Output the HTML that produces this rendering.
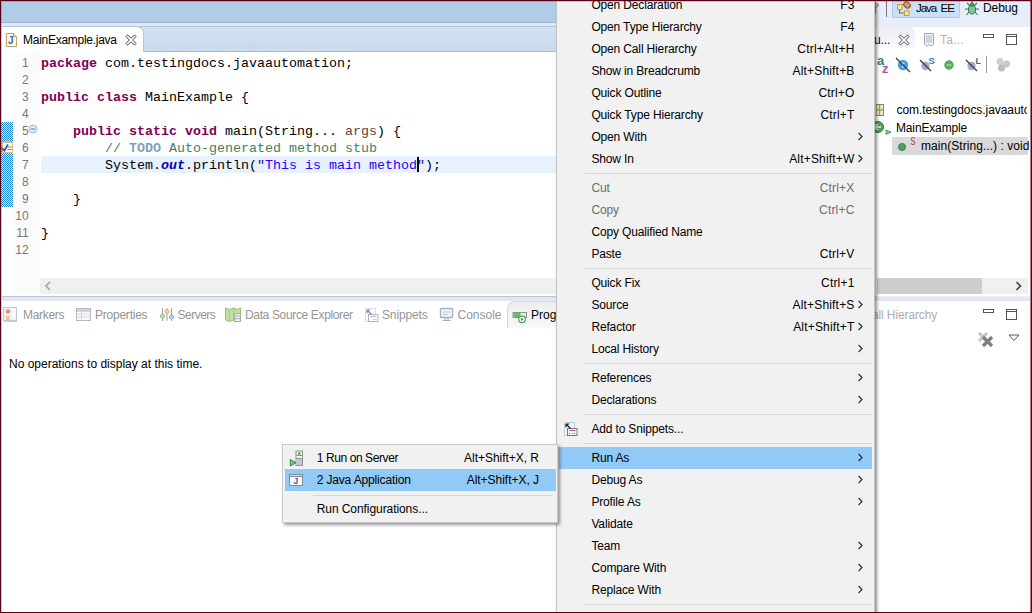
<!DOCTYPE html>
<html><head><meta charset="utf-8"><title>Eclipse - Run As Java Application</title>
<style>
*{box-sizing:border-box;margin:0;padding:0}
html,body{width:1032px;height:613px;overflow:hidden;background:#fff}
body{position:relative;font-family:"Liberation Sans",sans-serif;font-size:12px;color:#000;line-height:1}
#root{position:absolute;left:0;top:0;width:1032px;height:613px;overflow:hidden}
#root>div,#root>svg{position:absolute}
/* top */
#topbar{left:0;top:0;width:1032px;height:22px;background:#b1cce6}
#topline1{left:0;top:22px;width:1032px;height:1px;background:#9fb6d2}
#topband{left:0;top:23px;width:1032px;height:3px;background:#dfe8f6}
/* editor */
#edhead{left:2px;top:26px;width:870px;height:26px;background:linear-gradient(#d3e1f1,#c9d9ec);border-top:1px solid #b4c3d8;border-bottom:1px solid #a9bcd6}
#edtab{left:2px;top:26px;width:142px;height:26px;background:#fff;border-top:1px solid #b4c3d8;border-right:1px solid #b4c3d8;border-radius:0 7px 0 0}
#edtabtxt{left:23px;top:34.2px;letter-spacing:-.27px;white-space:nowrap}
#edbody{left:2px;top:52px;width:870px;height:226px;background:#fff}
#ruler{left:13px;top:52px;width:27px;height:242px;background:#fbfbfb}
#bluebar{left:1px;top:122px;width:12px;height:85px;background:#86bfe3;background-image:repeating-conic-gradient(#1f88d4 0% 25%,#d4f0fc 0% 50%);background-size:2px 2px}
#curline{left:41px;top:156px;width:520px;height:17px;background:#e8f2fe}
.cl{position:absolute;left:41px;height:17px;line-height:17px;font-family:"Liberation Mono",monospace;font-size:13.33px;white-space:pre;color:#000}
.ln{position:absolute;left:2px;width:26.7px;text-align:right;height:17px;line-height:17px;font-family:"Liberation Sans",sans-serif;font-size:12px;color:#787878;margin-top:0px}
.k{color:#7f0055}.a{color:#6a3e3e}.c{color:#3f7f5f}.t{color:#7f9fbf}.s{color:#2a00ff}.f{color:#0000c0;font-style:italic}
#caret{left:417px;top:157px;width:2px;height:15px;background:#000}
#hscroll{left:40px;top:278px;width:832px;height:16px;background:#f0f0f0}
#sash1{left:2px;top:296px;width:1028px;height:1px;background:#bcc4dc}
#sash2{left:2px;top:297px;width:1028px;height:4px;background:#e3e6f5}
/* bottom */
.bt{position:absolute;top:309px;color:#959595;white-space:nowrap}
#progtab{left:507px;top:301px;width:60px;height:27px;background:linear-gradient(#eeeeee,#f8f8f8);border-top:1px solid #d6d6d6;border-left:1px solid #d6d6d6;border-radius:8px 0 0 0}

/* right panel */
#persp{left:873px;top:0;width:159px;height:27px;background:#e8eef9}
#jee{left:892px;top:-1px;width:68px;height:19px;background:#c9e0f7;border:1px solid #a9cdf0}
#psep{left:886px;top:1px;width:1px;height:16px;background:#777}
.pt{position:absolute;top:2px;white-space:nowrap;color:#000}
#outl{left:877px;top:27px;width:152px;height:269px;background:#fff;border-radius:0 7px 0 0}
#outab{left:877px;top:27px;width:38px;height:21px;background:linear-gradient(#ececf2,#fbfbfd);border-radius:0 7px 0 0}
#osel{left:892px;top:137px;width:136px;height:18px;background:#d9d9d9}
.ot{position:absolute;white-space:nowrap;color:#000;letter-spacing:-.1px}
#oscroll{left:877px;top:278px;width:151px;height:16px;background:#f0f0f0}
#othumb{left:877px;top:278px;width:105px;height:16px;background:#cdcdcd}
/* menu */
#menu{left:556px;top:-30px;width:319px;height:660px;background:#f1f1f1;border:1px solid #c4c4c4;box-shadow:2px 2px 3px rgba(0,0,0,.45)}
.mi{position:absolute;left:2px;width:313px;height:22px;line-height:22px;white-space:nowrap}
.mi.hl{background:#91c9f7}
.mi .lb{position:absolute;left:32.4px;letter-spacing:-.15px}
.mi .sc{position:absolute;right:17.5px;letter-spacing:.18px}
.mi .ar{position:absolute;left:299.3px;top:6px}
.mi.dis{color:#6d6d6d}
.sep{position:absolute;left:28px;width:287px;height:1px;background:#d7d7d7}
#sub{left:282px;top:444px;width:275.5px;height:79px;background:#f1f1f1;border:1px solid #c8c8c8;box-shadow:2px 2px 3px rgba(0,0,0,.4)}
#sub .mi{left:2px;width:271px}
#sub .mi .lb{left:31.7px}
#sub .mi .sc{right:17px;letter-spacing:-.03px}
#frame{left:0;top:0;width:1032px;height:613px;border:1px solid #5a0015;pointer-events:none}
#frame2{left:1px;top:1px;width:1030px;height:611px;border:1px solid rgba(150,40,70,.28);border-right:none;border-bottom:none;pointer-events:none}
</style></head><body>
<div id="root">
<div id="topbar"></div><div id="topline1"></div><div id="topband"></div>
<div id="edhead"></div>
<div id="edbody"></div>
<div id="ruler"></div>
<div id="edtab"></div>
<div id="edtabtxt">MainExample.java</div>
<div id="bluebar"></div>
<div id="curline"></div>
<div class="ln" style="top:55px">1</div><div class="ln" style="top:72px">2</div><div class="ln" style="top:89px">3</div><div class="ln" style="top:106px">4</div><div class="ln" style="top:123px">5</div><div class="ln" style="top:140px">6</div><div class="ln" style="top:157px">7</div><div class="ln" style="top:174px">8</div><div class="ln" style="top:191px">9</div><div class="ln" style="top:208px">10</div><div class="ln" style="top:225px">11</div><div class="ln" style="top:242px">12</div>
<div class="cl" style="top:55px"><b class="k">package</b> com.testingdocs.javaautomation;</div><div class="cl" style="top:72px"></div><div class="cl" style="top:89px"><b class="k">public</b> <b class="k">class</b> MainExample {</div><div class="cl" style="top:106px"></div><div class="cl" style="top:123px">    <b class="k">public</b> <b class="k">static</b> <b class="k">void</b> main(String... <span class="a">args</span>) {</div><div class="cl" style="top:140px">        <span class="c">// <b class="t">TODO</b> Auto-generated method stub</span></div><div class="cl" style="top:157px">        System.<b class="f">out</b>.println(<span class="s">"This is main method"</span>);</div><div class="cl" style="top:174px"></div><div class="cl" style="top:191px">    }</div><div class="cl" style="top:208px"></div><div class="cl" style="top:225px">}</div><div class="cl" style="top:242px"></div>
<div id="caret"></div>
<div id="hscroll"></div>
<div id="sash1"></div><div id="sash2"></div><div style="left:876px;top:296px;width:154px;height:1px;background:#eef0f8"></div>
<div class="bt" style="left:23px;letter-spacing:-.3px">Markers</div>
<div class="bt" style="left:95px;letter-spacing:-.23px">Properties</div>
<div class="bt" style="left:177.5px;letter-spacing:-.5px">Servers</div>
<div class="bt" style="left:245px;letter-spacing:-.35px">Data Source Explorer</div>
<div class="bt" style="left:382px;letter-spacing:-.15px">Snippets</div>
<div class="bt" style="left:457.5px">Console</div>
<div id="progtab"></div>
<div class="bt" style="left:531px;color:#000">Prog</div>
<div style="left:9px;top:358px;white-space:nowrap">No operations to display at this time.</div>

<div id="persp"></div><div id="psep"></div><div id="jee"></div>
<svg style="left:896px;top:1px" width="16" height="16" viewBox="0 0 16 16"><path d="M3.500 8v4h5" fill="none" stroke="#8a6a2a" stroke-width="1.200"/><rect x="1.500" y="3.500" width="4.500" height="5" fill="#ffe79a" stroke="#c89a3a"/><rect x="8.500" y="10" width="4.500" height="4.500" fill="#ffe79a" stroke="#c89a3a"/><ellipse cx="11" cy="4" rx="3.700" ry="2.900" transform="rotate(40 11 4)" fill="#c98a4a" stroke="#7a4a1a" stroke-width=".9"/><path d="M9 2.500l3.500 3.500M10.300 1.600l3 3" stroke="#f0d090" stroke-width=".8"/></svg><svg style="left:874px;top:1px" width="7" height="14" viewBox="0 0 7 14"><path d="M1 1l4 3-3.500 3z" fill="#c8d8a0" stroke="#7a8a4a" stroke-width=".8"/><path d="M1.500 7v6" stroke="#8a8a8a"/></svg>
<div class="pt" style="left:916px;font-size:11.6px;letter-spacing:-1.1px;word-spacing:2.4px">Java EE</div>
<svg style="left:964px;top:0" width="16" height="17" viewBox="0 0 16 17"><g stroke="#3c7a55" stroke-width="1.100" fill="none"><path d="M3 3l3 3M13 3l-3 3M1 9h4M15 9h-4M2.500 15l3-3.500M13.500 15l-3-3.500M8 1v3"/></g><ellipse cx="8" cy="9.500" rx="3.600" ry="4.600" fill="#7fc6a0" stroke="#2f6d4a"/><circle cx="8" cy="4.600" r="1.800" fill="#4f9a73" stroke="#2f6d4a" stroke-width=".8"/></svg>
<div class="pt" style="left:983px;letter-spacing:-.1px">Debug</div>
<div id="outl"></div><div id="outab"></div>
<div class="ot" style="left:874px;top:34px">u...</div>
<svg style="left:898px;top:34px" width="12" height="12" viewBox="0 0 12 12"><path d="M1 2.500L2.500 1 6 4.200 9.500 1 11 2.500 7.800 6 11 9.500 9.500 11 6 7.800 2.500 11 1 9.500 4.200 6Z" fill="#fff" stroke="#4a4a4a" stroke-width="1"/></svg>
<svg style="left:923px;top:32px" width="12" height="16" viewBox="0 0 12 16"><path d="M1.500 1.500h9v11l-2.200 1.500-2.300-1.500-2.300 1.500L1.500 12.500Z" fill="#f3f4f8" stroke="#9fa6c0"/><path d="M3 4h6M3 6h6M3 8h6M3 10h6" stroke="#aab0c6" stroke-width="1"/></svg>
<div class="ot" style="left:940px;top:34px;color:#b4b4b4;letter-spacing:.3px">Ta...</div>
<svg style="left:983px;top:34px" width="11" height="5" viewBox="0 0 11 5"><rect x=".5" y=".5" width="10" height="3" fill="#fff" stroke="#555"/></svg>
<svg style="left:1006px;top:34px" width="11" height="11" viewBox="0 0 11 11"><rect x=".5" y=".5" width="10" height="10" fill="#fff" stroke="#555"/><path d="M.500 2.500h10" stroke="#555"/></svg>
<!-- outline toolbar -->
<svg style="left:876px;top:55px" width="160" height="20" viewBox="0 0 160 20">
<text x="1" y="10" font-family="Liberation Sans,sans-serif" font-weight="bold" font-size="13" fill="#2a8a70">a</text>
<text x="6" y="17.800" font-family="Liberation Sans,sans-serif" font-weight="bold" font-size="13" fill="#b0549c">z</text>
<circle cx="27" cy="10" r="5.200" fill="#4d9ed6"/><path d="M25.500 8h3M27 8v5" stroke="#cfe6f7" stroke-width="1.200" fill="none"/><path d="M20 3l14 14" stroke="#2d3a66" stroke-width="1.300"/>
<circle cx="49.500" cy="11" r="4.200" fill="#a4a9c6"/><path d="M44 5l11 11" stroke="#2d3a66" stroke-width="1.300"/><text x="52.500" y="9" font-family="Liberation Sans,sans-serif" font-weight="bold" font-size="9.500" fill="#3d7fb3">S</text>
<circle cx="73" cy="10" r="4.200" fill="#5fae66" stroke="#3c8a47" stroke-width=".8"/><path d="M70.500 10h5" stroke="#a9dcae" stroke-width="1.200"/>
<circle cx="95.500" cy="11" r="4.200" fill="#a4a9c6"/><path d="M90 5l11 11" stroke="#2d3a66" stroke-width="1.300"/><text x="99.500" y="9" font-family="Liberation Sans,sans-serif" font-weight="bold" font-size="9" fill="#4a5fa8">L</text>
<path d="M110.500 1v17" stroke="#9a9a9a" stroke-width="1"/>
<circle cx="124" cy="6.500" r="3.400" fill="#cfcfcf"/><circle cx="130.500" cy="9" r="3.400" fill="#c6c6c6"/><circle cx="125.500" cy="13" r="3.600" fill="#bdbdbd"/>
</svg>
<!-- outline tree -->
<svg style="left:876px;top:102px" width="14" height="16" viewBox="0 0 14 16"><rect x="0" y="2.500" width="7.500" height="11" fill="#ecebc9" stroke="#8a8a55"/><path d="M0 8h7.500M3.700 2.500v11" stroke="#8a8a55"/></svg>
<div class="ot" style="left:896.5px;top:104px;letter-spacing:-.06px;width:130.5px;overflow:hidden;height:16px">com.testingdocs.javaautomation</div>
<svg style="left:874px;top:119px" width="18" height="18" viewBox="0 0 18 18"><circle cx="4" cy="8" r="5.500" fill="#4ea35a" stroke="#2e7a3a"/><path d="M1 8h6M4 5.500a2.500 2.500 0 1 0 0 5" stroke="#e8f6ea" stroke-width="1.400" fill="none"/><path d="M12 11l5 2.200-5 2.200z" fill="#7fd0a0" stroke="#2e8a5a" stroke-width=".8"/></svg>
<div class="ot" style="left:896px;top:122px;letter-spacing:-.15px">MainExample</div>
<div id="osel"></div>
<svg style="left:897px;top:135px" width="22" height="18" viewBox="0 0 22 18"><circle cx="5" cy="12" r="3.600" fill="#4fa35a" stroke="#2f7d3c" stroke-width=".8"/><text x="13.600" y="10.200" font-family="Liberation Sans,sans-serif" font-size="11" fill="#c02040" textLength="4.800" lengthAdjust="spacingAndGlyphs">S</text></svg>
<div class="ot" style="left:921px;top:140px;letter-spacing:.05px">main(String...) : void</div>
<div id="oscroll"></div><div id="othumb"></div>
<svg style="left:1015px;top:281px" width="8" height="10" viewBox="0 0 8 10"><path d="M1.500 1l4 4-4 4" fill="none" stroke="#404040" stroke-width="1.600"/></svg>
<!-- bottom right -->
<div class="bt" style="left:872px;color:#adadad;letter-spacing:-.12px">all Hierarchy</div>
<svg style="left:983px;top:309px" width="11" height="5" viewBox="0 0 11 5"><rect x=".5" y=".5" width="10" height="3" fill="#fff" stroke="#555"/></svg>
<svg style="left:1006px;top:308.500px" width="11" height="11" viewBox="0 0 11 11"><rect x=".5" y=".5" width="10" height="10" fill="#fff" stroke="#555"/><path d="M.500 2.500h10" stroke="#555"/></svg>
<svg style="left:977px;top:331px" width="18" height="18" viewBox="0 0 18 18"><path d="M2 2l8 8M10 2l-8 8" stroke="#c4c4c4" stroke-width="3"/><path d="M6 6l9 9M15 6l-9 9" stroke="#7d7d7d" stroke-width="3.200"/></svg>
<svg style="left:1008px;top:334px" width="12" height="8" viewBox="0 0 12 8"><path d="M1 1h10l-5 5.500z" fill="#fff" stroke="#555" stroke-width="1"/></svg>
<div id="menu" style="top:0;height:613px;border-top:none;border-bottom:none">
<div class="mi" style="top:-6px"><span class="lb">Open Declaration</span><span class="sc">F3</span></div>
<div class="mi" style="top:16px"><span class="lb">Open Type Hierarchy</span><span class="sc">F4</span></div>
<div class="mi" style="top:38px"><span class="lb">Open Call Hierarchy</span><span class="sc">Ctrl+Alt+H</span></div>
<div class="mi" style="top:60px"><span class="lb">Show in Breadcrumb</span><span class="sc">Alt+Shift+B</span></div>
<div class="mi" style="top:82px"><span class="lb">Quick Outline</span><span class="sc">Ctrl+O</span></div>
<div class="mi" style="top:104px"><span class="lb">Quick Type Hierarchy</span><span class="sc">Ctrl+T</span></div>
<div class="mi" style="top:126px"><span class="lb">Open With</span><svg class="ar" width="5" height="9" viewBox="0 0 5 9"><path d="M.6 1L4 4.500 .6 8" fill="none" stroke="#1e2a3a" stroke-width="1.100"/></svg></div>
<div class="mi" style="top:148px"><span class="lb">Show In</span><span class="sc wa">Alt+Shift+W</span><svg class="ar" width="5" height="9" viewBox="0 0 5 9"><path d="M.6 1L4 4.500 .6 8" fill="none" stroke="#1e2a3a" stroke-width="1.100"/></svg></div>
<div class="sep" style="top:173px"></div>
<div class="mi dis" style="top:177px"><span class="lb">Cut</span><span class="sc">Ctrl+X</span></div>
<div class="mi dis" style="top:199px"><span class="lb">Copy</span><span class="sc">Ctrl+C</span></div>
<div class="mi" style="top:221px"><span class="lb">Copy Qualified Name</span></div>
<div class="mi" style="top:243px"><span class="lb">Paste</span><span class="sc">Ctrl+V</span></div>
<div class="sep" style="top:268px"></div>
<div class="mi" style="top:272px"><span class="lb">Quick Fix</span><span class="sc">Ctrl+1</span></div>
<div class="mi" style="top:294px"><span class="lb">Source</span><span class="sc wa">Alt+Shift+S</span><svg class="ar" width="5" height="9" viewBox="0 0 5 9"><path d="M.6 1L4 4.500 .6 8" fill="none" stroke="#1e2a3a" stroke-width="1.100"/></svg></div>
<div class="mi" style="top:316px"><span class="lb">Refactor</span><span class="sc wa">Alt+Shift+T</span><svg class="ar" width="5" height="9" viewBox="0 0 5 9"><path d="M.6 1L4 4.500 .6 8" fill="none" stroke="#1e2a3a" stroke-width="1.100"/></svg></div>
<div class="mi" style="top:338px"><span class="lb">Local History</span><svg class="ar" width="5" height="9" viewBox="0 0 5 9"><path d="M.6 1L4 4.500 .6 8" fill="none" stroke="#1e2a3a" stroke-width="1.100"/></svg></div>
<div class="sep" style="top:363px"></div>
<div class="mi" style="top:367px"><span class="lb">References</span><svg class="ar" width="5" height="9" viewBox="0 0 5 9"><path d="M.6 1L4 4.500 .6 8" fill="none" stroke="#1e2a3a" stroke-width="1.100"/></svg></div>
<div class="mi" style="top:389px"><span class="lb">Declarations</span><svg class="ar" width="5" height="9" viewBox="0 0 5 9"><path d="M.6 1L4 4.500 .6 8" fill="none" stroke="#1e2a3a" stroke-width="1.100"/></svg></div>
<div class="sep" style="top:414px"></div>
<div class="mi" style="top:418px"><span class="lb">Add to Snippets...</span></div>
<div class="sep" style="top:443px"></div>
<div class="mi hl" style="top:447px"><span class="lb">Run As</span><svg class="ar" width="5" height="9" viewBox="0 0 5 9"><path d="M.6 1L4 4.500 .6 8" fill="none" stroke="#1e2a3a" stroke-width="1.100"/></svg></div>
<div class="mi" style="top:469px"><span class="lb">Debug As</span><svg class="ar" width="5" height="9" viewBox="0 0 5 9"><path d="M.6 1L4 4.500 .6 8" fill="none" stroke="#1e2a3a" stroke-width="1.100"/></svg></div>
<div class="mi" style="top:491px"><span class="lb">Profile As</span><svg class="ar" width="5" height="9" viewBox="0 0 5 9"><path d="M.6 1L4 4.500 .6 8" fill="none" stroke="#1e2a3a" stroke-width="1.100"/></svg></div>
<div class="mi" style="top:513px"><span class="lb">Validate</span></div>
<div class="mi" style="top:535px"><span class="lb">Team</span><svg class="ar" width="5" height="9" viewBox="0 0 5 9"><path d="M.6 1L4 4.500 .6 8" fill="none" stroke="#1e2a3a" stroke-width="1.100"/></svg></div>
<div class="mi" style="top:557px"><span class="lb">Compare With</span><svg class="ar" width="5" height="9" viewBox="0 0 5 9"><path d="M.6 1L4 4.500 .6 8" fill="none" stroke="#1e2a3a" stroke-width="1.100"/></svg></div>
<div class="mi" style="top:579px"><span class="lb">Replace With</span><svg class="ar" width="5" height="9" viewBox="0 0 5 9"><path d="M.6 1L4 4.500 .6 8" fill="none" stroke="#1e2a3a" stroke-width="1.100"/></svg></div>
<div class="sep" style="top:604px"></div>
</div>
<div id="sub">
<div class="mi" style="top:2px"><span class="lb" style="letter-spacing:-.4px">1 Run on Server</span><span class="sc">Alt+Shift+X, R</span></div>
<div class="mi hl" style="top:24px"><span class="lb" style="letter-spacing:-.15px">2 Java Application</span><span class="sc">Alt+Shift+X, J</span></div>
<div class="sep" style="top:50px;left:30px;width:240px"></div>
<div class="mi" style="top:53px"><span class="lb" style="letter-spacing:-.07px">Run Configurations...</span></div>
</div>

<!-- editor tab icons -->
<svg style="left:5px;top:32px" width="13" height="16" viewBox="0 0 13 16"><path d="M1.500 1.500h7l3 3v10h-10z" fill="#fffdf3" stroke="#c0a262"/><path d="M8.500 1.500v3h3" fill="#f3e6b8" stroke="#c0a262"/><text x="3" y="12" font-family="Liberation Sans,sans-serif" font-weight="bold" font-size="10" fill="#3d5aa6">J</text></svg>
<svg style="left:125px;top:34px" width="12" height="12" viewBox="0 0 12 12"><path d="M1 2.500L2.500 1 6 4.200 9.500 1 11 2.500 7.800 6 11 9.500 9.500 11 6 7.800 2.500 11 1 9.500 4.200 6Z" fill="#fff" stroke="#4a4a4a" stroke-width="1"/></svg>
<!-- fold + task markers -->
<svg style="left:28.300px;top:124px" width="10" height="10" viewBox="0 0 10 10"><circle cx="5" cy="5" r="3.900" fill="#e1e9f3" stroke="#a6bad2"/><path d="M2.800 5h4.400" stroke="#5f7da2"/></svg>
<svg style="left:0px;top:138px" width="14" height="16" viewBox="0 0 14 16"><rect x="2.500" y="4.500" width="10" height="10" fill="#fbfbf8" stroke="#d9bd8c"/><path d="M4 4.500c0-3 7-3 7 0z" fill="#b9b9b9"/><path d="M2 10l2.300 2.800L8 6.500" fill="none" stroke="#2d55b8" stroke-width="1.700"/><path d="M8 9h4M7.500 11.500h4.500" stroke="#8a8a9a"/></svg>
<svg style="left:44px;top:281px" width="8" height="10" viewBox="0 0 8 10"><path d="M6 1l-4 4 4 4" fill="none" stroke="#a0a0a0" stroke-width="1.500"/></svg>
<!-- bottom tab icons -->
<svg style="left:3px;top:307px" width="16" height="16" viewBox="0 0 16 16"><rect x=".5" y=".5" width="13" height="13" fill="#eef4fb" stroke="#b9c9e2"/><circle cx="5" cy="4.500" r="2.200" fill="#e98a8a"/><rect x="3" y="9" width="4" height="4" fill="#f3c98a"/><path d="M9 3c3-1.500 4 1 2.500 3-1 1.500-1.500 2.500-.5 5" fill="none" stroke="#fff" stroke-width="2"/><path d="M1 14.500h13" stroke="#c5cfe0"/></svg>
<svg style="left:76px;top:307px" width="15" height="15" viewBox="0 0 15 15"><rect x=".5" y="1.500" width="14" height="12" fill="#fafbfd" stroke="#b3b7c2"/><rect x=".5" y="1.500" width="14" height="2.500" fill="#d7dae2" stroke="#b3b7c2"/><path d="M5.500 4v9.500M.500 7h14M.500 10h14" stroke="#d5d8e0"/></svg>
<svg style="left:159px;top:307px" width="16" height="15" viewBox="0 0 16 15"><path d="M3.500 1v13M8 1v13M12.500 1v13" stroke="#9aa0ac" stroke-width="1"/><circle cx="3.500" cy="9" r="2" fill="#cfe8b0" stroke="#8fb86a"/><circle cx="8" cy="4.500" r="2" fill="#f6d9a6" stroke="#d9a860"/><circle cx="12.500" cy="10" r="2" fill="#c5daf3" stroke="#7fa4d4"/></svg>
<svg style="left:224px;top:306px" width="18" height="17" viewBox="0 0 18 17"><path d="M1.500 2l4 1.500 4-1.500 4 1.500 3-1.500v12l-3 1.500-4-1.500-4 1.500-4-1.500z" fill="#bfe2a0" stroke="#8fc46a"/><path d="M5.500 3.500v12M9.500 2v12" stroke="#9fd080"/><rect x="10.500" y="7.500" width="6" height="8" fill="#f2f2f2" stroke="#a9a9a9"/><path d="M10.500 10h6M10.500 12.700h6" stroke="#a9a9a9"/></svg>
<svg style="left:364px;top:307px" width="16" height="16" viewBox="0 0 16 16"><rect x="1.500" y="1.500" width="10" height="13" fill="#fafbfd" stroke="#d5dde8"/><rect x="4.500" y="7.500" width="9.500" height="7" fill="#fff" stroke="#a3b6d2"/><path d="M6.500 9.500h6" stroke="#e5a4ac"/><path d="M8.500 12.500h4" stroke="#c8d0dc"/><path d="M3 3l4.500 4.500M3 3h3.200M3 3v3.200" stroke="#8a8a8a" stroke-width="1.200" fill="none"/></svg>
<svg style="left:439px;top:307px" width="15" height="15" viewBox="0 0 15 15"><rect x="1.500" y="1.500" width="12" height="9" rx="1" fill="#f0f3fa" stroke="#a3aed0" stroke-width="1.400"/><path d="M4 5h7M4 7.500h5" stroke="#bcc5dc"/><path d="M6 11v2M9 11v2M3.500 13.500h8" stroke="#a3aed0" stroke-width="1.200"/></svg>
<svg style="left:512px;top:310px" width="16" height="14" viewBox="0 0 16 14"><rect x="1" y="2.500" width="13.500" height="5" fill="#e4ece4" stroke="#8a968a"/><rect x="1.500" y="3" width="7" height="4" fill="#6fb76f"/><circle cx="10" cy="9.300" r="3.300" fill="#fff" stroke="#3c9a4a" stroke-width="1.100"/><path d="M9 7.600l2.600 1.700-2.600 1.700z" fill="#3c9a4a"/></svg>
<!-- menu / submenu icons -->
<svg style="left:563px;top:421px" width="16" height="16" viewBox="0 0 16 16"><rect x="1.500" y="1.500" width="10" height="13" fill="#f5f8fc" stroke="#bccbdd"/><rect x="4.500" y="7.500" width="9.500" height="7" fill="#fff" stroke="#587db0"/><path d="M6.500 9.500h6" stroke="#d05060"/><path d="M8.500 12.500h4" stroke="#9aa8bc"/><path d="M6 12.500h1" stroke="#d05060"/><path d="M3 3l4.500 4.500M3 3h3.200M3 3v3.200" stroke="#1a1a1a" stroke-width="1.200" fill="none"/></svg>
<svg style="left:289px;top:449px" width="15" height="18" viewBox="0 0 15 18"><rect x="7" y="2" width="6.500" height="14.500" fill="#f4f6f4" stroke="#8a968a"/><rect x="7.500" y="10" width="5.500" height="6" fill="#c9c6dc"/><path d="M7 9.500h6.500M7 6.500h6.500" stroke="#8a968a"/><rect x="9" y="3.500" width="2.500" height="2" fill="#3c9a4a"/><path d="M1.300 10.500l5.700 3.200-5.700 3.200z" fill="#5fcf7f" stroke="#2e8a4a" stroke-width="1"/></svg>
<svg style="left:289px;top:474px" width="15" height="13" viewBox="0 0 15 13"><rect x=".5" y=".5" width="13" height="11" fill="#fbfcfe" stroke="#7f8c96"/><path d="M.500 2.500h13" stroke="#7f8c96"/><path d="M1 1.500h12" stroke="#d8dde2"/><text x="4.600" y="10.300" font-family="Liberation Sans,sans-serif" font-weight="bold" font-size="8.500" fill="#5a4a9c">J</text></svg>
<div id="frame"></div><div id="frame2"></div><div style="left:1030px;top:1px;width:1px;height:611px;background:rgba(90,0,21,.5)"></div>
</div>
</body></html>
